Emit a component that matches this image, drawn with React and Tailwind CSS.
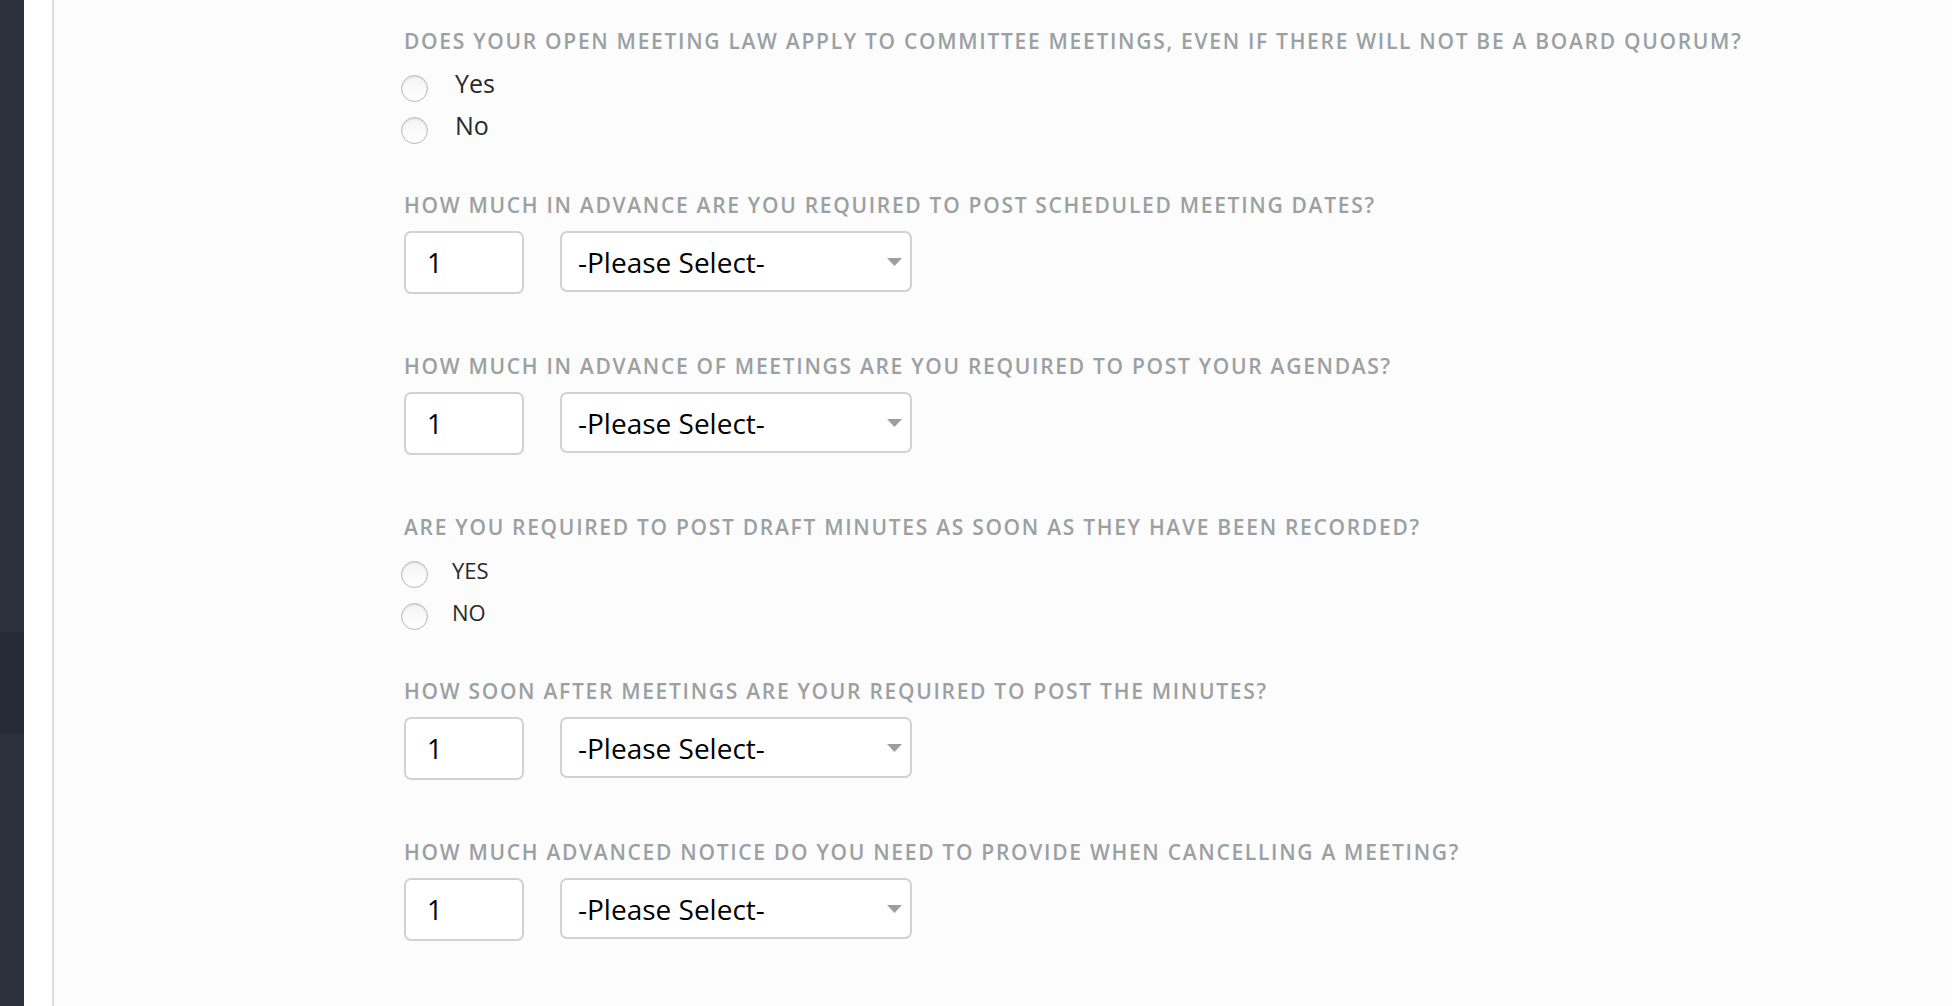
import React, { useState } from "react";

const questions = [
  { type: "radio", label: "Does your open meeting law apply to committee meetings, even if there will not be a board quorum?", options: ["Yes", "No"], small: false },
  { type: "select", label: "How much in advance are you required to post scheduled meeting dates?" },
  { type: "select", label: "How much in advance of meetings are you required to post your agendas?" },
  { type: "radio", label: "Are you required to post draft minutes as soon as they have been recorded?", options: ["YES", "NO"], small: true },
  { type: "select", label: "How soon after meetings are your required to post the minutes?" },
  { type: "select", label: "How much advanced notice do you need to provide when cancelling a meeting?" },
];

function Label({ children }) {
  return (
    <div className="h-6 leading-6 text-[21px] uppercase tracking-[1.7px] text-[#9ba0a2] font-semibold whitespace-nowrap">
      {children}
    </div>
  );
}

function RadioGroup({ name, options, small }) {
  const [value, setValue] = useState(null);
  return (
    <div className="mt-[14px] -ml-[3px]">
      {options.map((opt) => (
        <label key={opt} className="flex items-center h-[42px] cursor-pointer">
          <input
            type="radio"
            name={name}
            checked={value === opt}
            onChange={() => setValue(opt)}
            className="sr-only"
          />
          <span className="w-[27px] h-[27px] rounded-full border border-[#b9b9b9] bg-gradient-to-b from-[#f4f4f4] to-white shadow-[inset_0_1px_2px_rgba(0,0,0,0.12)] flex items-center justify-center shrink-0">
            {value === opt && <span className="w-[11px] h-[11px] rounded-full bg-[#555]" />}
          </span>
          <span className={`pb-[8px] text-[#2a2a2a] ${small ? "ml-[24px] text-[22px]" : "ml-[27px] text-[25px]"}`}>{opt}</span>
        </label>
      ))}
    </div>
  );
}

function AmountSelect() {
  const [num, setNum] = useState("1");
  return (
    <div className="mt-[14px] flex items-start gap-[36px]">
      <input
        type="text"
        value={num}
        onChange={(e) => setNum(e.target.value)}
        className="w-[120px] h-[63px] rounded-[7px] border-2 border-[#d2d2d2] bg-white pl-[21px] text-[27px] text-black outline-none"
      />
      <div className="relative w-[352px] h-[61px]">
        <select className="appearance-none w-full h-full rounded-[7px] border-2 border-[#d2d2d2] bg-white pl-[16px] text-[28px] text-black outline-none">
          <option>-Please Select-</option>
          <option>Days</option>
          <option>Weeks</option>
          <option>Hours</option>
        </select>
        <svg className="absolute right-[10px] top-[27px] pointer-events-none" width="15" height="8" viewBox="0 0 15 8">
          <path d="M0 0 L15 0 L7.5 8 Z" fill="#9c9fa1" />
        </svg>
      </div>
    </div>
  );
}

export default function App() {
  return (
    <div className="h-[1006px] flex bg-[#fcfcfc] overflow-hidden" style={{ fontFamily: "'Open Sans', 'Liberation Sans', sans-serif" }}>
      <aside className="w-6 shrink-0 bg-[#2b313d] flex flex-col">
        <div className="h-[632px]" />
        <div className="h-[102px] bg-[#252b36]" />
      </aside>
      <div className="w-[30px] shrink-0 bg-white border-r-2 border-[#dddddd]" />
      <main className="flex-1 pl-[350px] pt-[29px]">
        {questions.map((q, i) => (
          <div key={i} className={q.type === "radio" ? "mb-[42px]" : "mb-[60px]"}>
            <Label>{q.label}</Label>
            {q.type === "radio" ? (
              <RadioGroup name={`q${i}`} options={q.options} small={q.small} />
            ) : (
              <AmountSelect />
            )}
          </div>
        ))}
      </main>
    </div>
  );
}
